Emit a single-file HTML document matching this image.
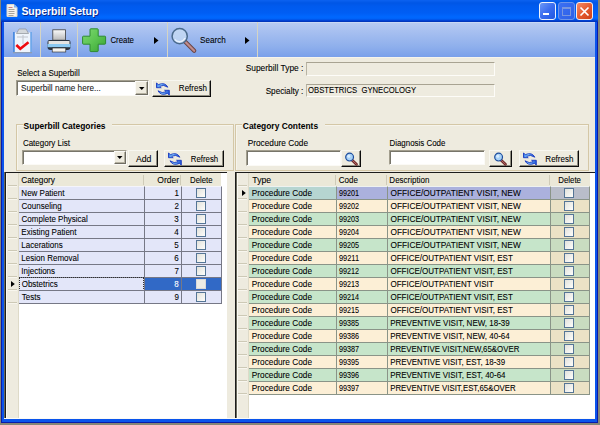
<!DOCTYPE html>
<html><head><meta charset="utf-8">
<style>
*{margin:0;padding:0;box-sizing:border-box}
html,body{width:600px;height:425px;overflow:hidden;background:#868678}
body{position:relative;font-family:"Liberation Sans",sans-serif}
.a{position:absolute}
text{font-family:"Liberation Sans",sans-serif}
</style></head><body>
<div class="a" style="left:1px;top:0;width:597px;height:423px;background:#0a1aa8"></div>
<div class="a" style="left:2px;top:0;width:595px;height:421.5px;background:#0a54ec"></div>
<div class="a" style="left:1px;top:0;width:597px;height:22px;background:linear-gradient(#0c62f0 0,#0056e6 3px,#005aee 6px,#005ef4 13px,#0068ff 17px,#0062f8 19px,#0042d4 20.5px,#0030b0 22px)"></div>
<svg class="a" style="left:6px;top:4px" width="12" height="13" viewBox="0 0 12 13">
<path d="M1 .5h7l3 3v9H1z" fill="#f4f2ec" stroke="#dcd8cc"/>
<path d="M8 .5v3h3z" fill="#7ab0f6"/>
<path d="M2.5 3.5h4" stroke="#d08080"/><path d="M2.5 5.5h6M2.5 7.5h6M2.5 9.5h6M2.5 11.5h5" stroke="#a8a49c"/>
</svg>
<div class="a" style="left:539px;top:2px;width:17px;height:18px;border:1px solid #eef2fc;border-radius:3px;background:linear-gradient(135deg,#6c98f6,#3a6cf0 50%,#2058e0)"></div>
<div class="a" style="left:543px;top:13px;width:6px;height:2px;background:#fff"></div>
<div class="a" style="left:558px;top:2px;width:17px;height:18px;border:1px solid #6c94ea;border-radius:3px;background:linear-gradient(135deg,#3c70f2,#2c60e8)"></div>
<div class="a" style="left:562px;top:7px;width:9px;height:9px;border:1px solid #7896e0;border-top-width:2px"></div>
<div class="a" style="left:576px;top:2px;width:17px;height:18px;border:1px solid #f4ecec;border-radius:3px;background:linear-gradient(135deg,#f48a66,#e4582c 55%,#cc4018)"></div>
<svg class="a" style="left:576px;top:2px" width="17" height="18"><path d="M4.5 5.5l8 8M12.5 5.5l-8 8" stroke="#fff" stroke-width="1.7"/></svg>
<div class="a" style="left:4px;top:22px;width:591px;height:35px;background:linear-gradient(#dae4f8 0,#b6caf2 1px,#a6bff0 10px,#8eafec 25px,#7aa0ea 35px)"></div>
<div class="a" style="left:40px;top:22px;width:1px;height:35px;background:#d4d4c4"></div>
<div class="a" style="left:77px;top:22px;width:1px;height:35px;background:#d4d4c4"></div>
<div class="a" style="left:167px;top:22px;width:1px;height:35px;background:#d4d4c4"></div>
<div class="a" style="left:257px;top:22px;width:1px;height:35px;background:#d4d4c4"></div>
<svg class="a" style="left:12px;top:28px" width="22" height="26" viewBox="0 0 22 26">
<rect x="1.5" y="4.5" width="18" height="20.5" fill="#eef4fc"/>
<rect x="1" y="4" width="1.8" height="21" fill="#4a8ae0"/>
<rect x="18.2" y="4" width="1.8" height="21" fill="#70a8ea"/>
<rect x="1" y="24" width="19" height="1.3" fill="#8c9cb4"/>
<path d="M7 1L14 1L16.5 5.5L4.5 5.5z" fill="#d4d8dc" stroke="#8c9098" stroke-width=".7"/>
<path d="M5 9h11M11 7v9" stroke="#c0c4cc" stroke-width="1"/>
<path d="M4.3 17L8.3 20.8L16.5 14.3" stroke="#ee0a10" stroke-width="2.6" fill="none"/>
</svg>
<svg class="a" style="left:45px;top:28px" width="26" height="26" viewBox="0 0 26 26">
<defs><linearGradient id="pp" x1="0" y1="0" x2="0" y2="1"><stop offset="0" stop-color="#fbfbfb"/><stop offset="1" stop-color="#b8b8b8"/></linearGradient></defs>
<rect x="7.8" y="1.8" width="12.6" height="10.4" fill="url(#pp)" stroke="#3c3c3c" stroke-width=".8"/>
<path d="M4.5 12h19a2 2 0 0 1 2 2v5a3 3 0 0 1-3 3h-17a3 3 0 0 1-3-3v-5a2 2 0 0 1 2-2z" fill="#2a3440"/>
<rect x="3.5" y="13" width="21" height="3" fill="#e4e4e2"/>
<rect x="2.5" y="16" width="23" height="3.2" fill="#8ccaf2"/>
<rect x="7.2" y="20" width="13.6" height="4" fill="#f4f2ee" stroke="#222" stroke-width=".6"/>
</svg>
<svg class="a" style="left:81px;top:28px" width="26" height="26" viewBox="0 0 26 26">
<defs><linearGradient id="gp" x1="0" y1="0" x2="1" y2="1"><stop offset="0" stop-color="#80d872"/><stop offset=".5" stop-color="#5cc452"/><stop offset="1" stop-color="#38a234"/></linearGradient></defs>
<path d="M9.8 0.8h6.6a.8.8 0 0 1 .8.8v6.6h6.6a.8.8 0 0 1 .8.8v6.4a.8.8 0 0 1-.8.8h-6.6v6.6a.8.8 0 0 1-.8.8h-6.6a.8.8 0 0 1-.8-.8v-6.6h-6.6a.8.8 0 0 1-.8-.8v-6.4a.8.8 0 0 1 .8-.8h6.6v-6.6a.8.8 0 0 1 .8-.8z" fill="url(#gp)" stroke="#2e8a30" stroke-width="1"/>
</svg>
<svg class="a" style="left:154px;top:37px" width="5" height="7"><path d="M0 0l4.5 3.5L0 7z" fill="#000"/></svg>
<svg class="a" style="left:170px;top:27px" width="28" height="28" viewBox="0 0 28 28">
<path d="M15 14.5l9.2 9.3" stroke="#6a4444" stroke-width="4.2" stroke-linecap="round"/>
<path d="M15 14.5l9.2 9.3" stroke="#c08c8c" stroke-width="2.2" stroke-linecap="round"/>
<circle cx="9.7" cy="9.2" r="7.6" fill="#c8dcf4" fill-opacity=".75" stroke="#4a6a8c" stroke-width="1.5"/>
<path d="M4.8 12.5A6 6 0 0 0 15 11" fill="none" stroke="#f4faff" stroke-width="1.3" opacity=".8"/>
</svg>
<svg class="a" style="left:245px;top:37px" width="5" height="7"><path d="M0 0l4.5 3.5L0 7z" fill="#000"/></svg>
<div class="a" style="left:4px;top:57px;width:591px;height:362px;background:#eeebdf"></div>
<div class="a" style="left:4px;top:57px;width:591px;height:1px;background:#f6f4ec"></div>
<div class="a" style="left:16px;top:80px;width:133px;height:16px;background:#fff;border-top:1px solid #a29e8e;border-left:1px solid #a29e8e;border-bottom:1px solid #fbfaf6;border-right:1px solid #fbfaf6"></div>
<div class="a" style="left:17px;top:81px;width:131px;height:1px;background:#77756a"></div>
<div class="a" style="left:17px;top:81px;width:1px;height:14px;background:#77756a"></div>
<div class="a" style="left:135px;top:81px;width:13px;height:14px;background:#eeebdf;border-top:1px solid #fbfaf6;border-left:1px solid #fbfaf6;border-right:1px solid #6e6c62;border-bottom:1px solid #6e6c62"></div>
<div class="a" style="left:136px;top:93px;width:11px;height:1px;background:#b4b0a0"></div>
<div class="a" style="left:146px;top:82px;width:1px;height:12px;background:#b4b0a0"></div>
<svg class="a" style="left:138.5px;top:86.5px" width="6" height="4"><path d="M0 0h5.5L2.75 3z" fill="#000"/></svg>
<div class="a" style="left:152px;top:80px;width:59px;height:17px;background:#eeebdf;border-top:1px solid #f8f7f0;border-left:1px solid #f8f7f0;border-right:1px solid #0c0c0c;border-bottom:1px solid #0c0c0c"></div>
<div class="a" style="left:153px;top:95px;width:57px;height:1px;background:#8e8c80"></div>
<div class="a" style="left:209px;top:81px;width:1px;height:15px;background:#8e8c80"></div>
<svg class="a" style="left:155px;top:81px" width="16" height="16" viewBox="0 0 16 16">
<defs><linearGradient id="rg155" x1="0" y1="0" x2="1" y2="0"><stop offset="0" stop-color="#3a78e8"/><stop offset=".35" stop-color="#8cd8ff"/><stop offset=".7" stop-color="#4a8cf0"/><stop offset="1" stop-color="#2050d0"/></linearGradient></defs>
<path d="M1.5 2.0L1.5 6.7L6.2 6.7L4.6 5.2Q8.5 3.2 12.8 6.2Q10 0.8 3.4 3.6Z" fill="url(#rg155)" stroke="#1838c0" stroke-width=".9" stroke-linejoin="round"/>
<path d="M13.5 13L13.5 8.3L8.8 8.3L10.4 9.8Q6.5 11.8 2.2 8.8Q5 14.2 11.6 11.4Z" transform="translate(0.8 1)" fill="url(#rg155)" stroke="#1838c0" stroke-width=".9" stroke-linejoin="round"/>
</svg>
<div class="a" style="left:306px;top:62px;width:189px;height:14px;background:#eeebdf;border-top:1px solid #a8a392;border-left:1px solid #b8b4a4;border-right:1px solid #fdfcf8;border-bottom:1px solid #fdfcf8"></div>
<div class="a" style="left:306px;top:84px;width:189px;height:13px;background:#eeebdf;border-top:1px solid #a8a392;border-left:1px solid #b8b4a4;border-right:1px solid #fdfcf8;border-bottom:1px solid #fdfcf8"></div>
<div class="a" style="left:16px;top:124px;width:218px;height:47px;border:1px solid #d4c7a6"></div>
<div class="a" style="left:17px;top:125px;width:216px;height:45px;border-left:1px solid #f6f4ec;border-top:1px solid #f6f4ec"></div>
<div class="a" style="left:23px;top:124px;width:89px;height:2px;background:#eeebdf"></div>
<div class="a" style="left:22px;top:150px;width:105px;height:15px;background:#fff;border-top:1px solid #a29e8e;border-left:1px solid #a29e8e;border-bottom:1px solid #fbfaf6;border-right:1px solid #fbfaf6"></div>
<div class="a" style="left:23px;top:151px;width:103px;height:1px;background:#77756a"></div>
<div class="a" style="left:23px;top:151px;width:1px;height:13px;background:#77756a"></div>
<div class="a" style="left:114px;top:151px;width:12px;height:13px;background:#eeebdf;border-top:1px solid #fbfaf6;border-left:1px solid #fbfaf6;border-right:1px solid #6e6c62;border-bottom:1px solid #6e6c62"></div>
<div class="a" style="left:115px;top:162px;width:10px;height:1px;background:#b4b0a0"></div>
<div class="a" style="left:124px;top:152px;width:1px;height:11px;background:#b4b0a0"></div>
<svg class="a" style="left:117.0px;top:156.0px" width="6" height="4"><path d="M0 0h5.5L2.75 3z" fill="#000"/></svg>
<div class="a" style="left:128px;top:150px;width:30px;height:17px;background:#eeebdf;border-top:1px solid #f8f7f0;border-left:1px solid #f8f7f0;border-right:1px solid #0c0c0c;border-bottom:1px solid #0c0c0c"></div>
<div class="a" style="left:129px;top:165px;width:28px;height:1px;background:#8e8c80"></div>
<div class="a" style="left:156px;top:151px;width:1px;height:15px;background:#8e8c80"></div>
<div class="a" style="left:164px;top:150px;width:60px;height:17px;background:#eeebdf;border-top:1px solid #f8f7f0;border-left:1px solid #f8f7f0;border-right:1px solid #0c0c0c;border-bottom:1px solid #0c0c0c"></div>
<div class="a" style="left:165px;top:165px;width:58px;height:1px;background:#8e8c80"></div>
<div class="a" style="left:222px;top:151px;width:1px;height:15px;background:#8e8c80"></div>
<svg class="a" style="left:167px;top:151px" width="16" height="16" viewBox="0 0 16 16">
<defs><linearGradient id="rg167" x1="0" y1="0" x2="1" y2="0"><stop offset="0" stop-color="#3a78e8"/><stop offset=".35" stop-color="#8cd8ff"/><stop offset=".7" stop-color="#4a8cf0"/><stop offset="1" stop-color="#2050d0"/></linearGradient></defs>
<path d="M1.5 2.0L1.5 6.7L6.2 6.7L4.6 5.2Q8.5 3.2 12.8 6.2Q10 0.8 3.4 3.6Z" fill="url(#rg167)" stroke="#1838c0" stroke-width=".9" stroke-linejoin="round"/>
<path d="M13.5 13L13.5 8.3L8.8 8.3L10.4 9.8Q6.5 11.8 2.2 8.8Q5 14.2 11.6 11.4Z" transform="translate(0.8 1)" fill="url(#rg167)" stroke="#1838c0" stroke-width=".9" stroke-linejoin="round"/>
</svg>
<div class="a" style="left:235px;top:124px;width:354px;height:47px;border:1px solid #d4c7a6"></div>
<div class="a" style="left:236px;top:125px;width:352px;height:45px;border-left:1px solid #f6f4ec;border-top:1px solid #f6f4ec"></div>
<div class="a" style="left:242px;top:124px;width:83px;height:2px;background:#eeebdf"></div>
<div class="a" style="left:246px;top:150px;width:95px;height:16px;background:#fff;border-top:1px solid #a29e8e;border-left:1px solid #a29e8e;border-bottom:1px solid #fbfaf6;border-right:1px solid #fbfaf6"></div>
<div class="a" style="left:247px;top:151px;width:93px;height:1px;background:#77756a"></div>
<div class="a" style="left:247px;top:151px;width:1px;height:14px;background:#77756a"></div>
<div class="a" style="left:341px;top:150px;width:20px;height:17px;background:#eeebdf;border-top:1px solid #f8f7f0;border-left:1px solid #f8f7f0;border-right:1px solid #0c0c0c;border-bottom:1px solid #0c0c0c"></div>
<div class="a" style="left:342px;top:165px;width:18px;height:1px;background:#8e8c80"></div>
<div class="a" style="left:359px;top:151px;width:1px;height:15px;background:#8e8c80"></div>
<svg class="a" style="left:344px;top:152px" width="14" height="14" viewBox="0 0 14 14">
<path d="M8.2 8.2l4.2 4.0" stroke="#6e2a2a" stroke-width="2.8" stroke-linecap="round"/>
<path d="M8.2 8.2l4.2 4.0" stroke="#b86a68" stroke-width="1" stroke-linecap="round"/>
<circle cx="5.6" cy="5.1" r="3.9" fill="#a8d2f8" stroke="#1c4c9c" stroke-width="1.2"/>
<circle cx="4.8" cy="4.3" r="1.5" fill="#e6f4ff" opacity=".8"/>
</svg>
<div class="a" style="left:389px;top:150px;width:96px;height:15px;background:#fff;border-top:1px solid #a29e8e;border-left:1px solid #a29e8e;border-bottom:1px solid #fbfaf6;border-right:1px solid #fbfaf6"></div>
<div class="a" style="left:390px;top:151px;width:94px;height:1px;background:#77756a"></div>
<div class="a" style="left:390px;top:151px;width:1px;height:13px;background:#77756a"></div>
<div class="a" style="left:489px;top:150px;width:23px;height:17px;background:#eeebdf;border-top:1px solid #f8f7f0;border-left:1px solid #f8f7f0;border-right:1px solid #0c0c0c;border-bottom:1px solid #0c0c0c"></div>
<div class="a" style="left:490px;top:165px;width:21px;height:1px;background:#8e8c80"></div>
<div class="a" style="left:510px;top:151px;width:1px;height:15px;background:#8e8c80"></div>
<svg class="a" style="left:493px;top:152px" width="14" height="14" viewBox="0 0 14 14">
<path d="M8.2 8.2l4.2 4.0" stroke="#6e2a2a" stroke-width="2.8" stroke-linecap="round"/>
<path d="M8.2 8.2l4.2 4.0" stroke="#b86a68" stroke-width="1" stroke-linecap="round"/>
<circle cx="5.6" cy="5.1" r="3.9" fill="#a8d2f8" stroke="#1c4c9c" stroke-width="1.2"/>
<circle cx="4.8" cy="4.3" r="1.5" fill="#e6f4ff" opacity=".8"/>
</svg>
<div class="a" style="left:519px;top:150px;width:60px;height:17px;background:#eeebdf;border-top:1px solid #f8f7f0;border-left:1px solid #f8f7f0;border-right:1px solid #0c0c0c;border-bottom:1px solid #0c0c0c"></div>
<div class="a" style="left:520px;top:165px;width:58px;height:1px;background:#8e8c80"></div>
<div class="a" style="left:577px;top:151px;width:1px;height:15px;background:#8e8c80"></div>
<svg class="a" style="left:522px;top:151px" width="16" height="16" viewBox="0 0 16 16">
<defs><linearGradient id="rg522" x1="0" y1="0" x2="1" y2="0"><stop offset="0" stop-color="#3a78e8"/><stop offset=".35" stop-color="#8cd8ff"/><stop offset=".7" stop-color="#4a8cf0"/><stop offset="1" stop-color="#2050d0"/></linearGradient></defs>
<path d="M1.5 2.0L1.5 6.7L6.2 6.7L4.6 5.2Q8.5 3.2 12.8 6.2Q10 0.8 3.4 3.6Z" fill="url(#rg522)" stroke="#1838c0" stroke-width=".9" stroke-linejoin="round"/>
<path d="M13.5 13L13.5 8.3L8.8 8.3L10.4 9.8Q6.5 11.8 2.2 8.8Q5 14.2 11.6 11.4Z" transform="translate(0.8 1)" fill="url(#rg522)" stroke="#1838c0" stroke-width=".9" stroke-linejoin="round"/>
</svg>
<div class="a" style="left:5px;top:172px;width:222px;height:247px;background:#fff;border-top:1px solid #1c1c1c;border-left:1px solid #1c1c1c"></div>
<div class="a" style="left:227px;top:172px;width:8px;height:247px;background:#eeebdf"></div>
<div class="a" style="left:4px;top:172px;width:1px;height:247px;background:#6a6a5c"></div>
<div class="a" style="left:6px;top:173px;width:13px;height:246px;background:#eeebdf;border-left:1px solid #fbfaf4;border-right:1px solid #dedac8"></div>
<div class="a" style="left:19px;top:173px;width:202px;height:13px;background:#ebe8d8"></div>
<div class="a" style="left:143px;top:175px;width:1px;height:10px;background:#cfcbb8"></div>
<div class="a" style="left:180px;top:175px;width:1px;height:10px;background:#cfcbb8"></div>
<div class="a" style="left:8px;top:185px;width:9px;height:1px;background:#cdc9b6"></div>
<div class="a" style="left:8px;top:186px;width:9px;height:1px;background:#f8f6ee"></div>
<div class="a" style="left:19px;top:186px;width:125px;height:13px;background:#e3e6f9;border-top:1px solid #f4f4fb"></div>
<div class="a" style="left:144px;top:186px;width:37px;height:13px;background:#e3e6f9;border-top:1px solid #f4f4fb;border-left:1px solid #767886"></div>
<div class="a" style="left:181px;top:186px;width:41px;height:13px;background:#e3e6f9;border-top:1px solid #f4f4fb;border-left:1px solid #767886;border-right:1px solid #767886"></div>
<div class="a" style="left:196px;top:188px;width:10px;height:10px;background:linear-gradient(135deg,#e2e2dc,#fdfdfb);border:1px solid #557596"></div>
<div class="a" style="left:8px;top:198px;width:9px;height:1px;background:#cdc9b6"></div>
<div class="a" style="left:8px;top:199px;width:9px;height:1px;background:#f8f6ee"></div>
<div class="a" style="left:19px;top:199px;width:125px;height:13px;background:#e3e6f9;border-top:1px solid #767886"></div>
<div class="a" style="left:144px;top:199px;width:37px;height:13px;background:#e3e6f9;border-top:1px solid #767886;border-left:1px solid #767886"></div>
<div class="a" style="left:181px;top:199px;width:41px;height:13px;background:#e3e6f9;border-top:1px solid #767886;border-left:1px solid #767886;border-right:1px solid #767886"></div>
<div class="a" style="left:196px;top:201px;width:10px;height:10px;background:linear-gradient(135deg,#e2e2dc,#fdfdfb);border:1px solid #557596"></div>
<div class="a" style="left:8px;top:211px;width:9px;height:1px;background:#cdc9b6"></div>
<div class="a" style="left:8px;top:212px;width:9px;height:1px;background:#f8f6ee"></div>
<div class="a" style="left:19px;top:212px;width:125px;height:13px;background:#e3e6f9;border-top:1px solid #767886"></div>
<div class="a" style="left:144px;top:212px;width:37px;height:13px;background:#e3e6f9;border-top:1px solid #767886;border-left:1px solid #767886"></div>
<div class="a" style="left:181px;top:212px;width:41px;height:13px;background:#e3e6f9;border-top:1px solid #767886;border-left:1px solid #767886;border-right:1px solid #767886"></div>
<div class="a" style="left:196px;top:214px;width:10px;height:10px;background:linear-gradient(135deg,#e2e2dc,#fdfdfb);border:1px solid #557596"></div>
<div class="a" style="left:8px;top:224px;width:9px;height:1px;background:#cdc9b6"></div>
<div class="a" style="left:8px;top:225px;width:9px;height:1px;background:#f8f6ee"></div>
<div class="a" style="left:19px;top:225px;width:125px;height:13px;background:#e3e6f9;border-top:1px solid #767886"></div>
<div class="a" style="left:144px;top:225px;width:37px;height:13px;background:#e3e6f9;border-top:1px solid #767886;border-left:1px solid #767886"></div>
<div class="a" style="left:181px;top:225px;width:41px;height:13px;background:#e3e6f9;border-top:1px solid #767886;border-left:1px solid #767886;border-right:1px solid #767886"></div>
<div class="a" style="left:196px;top:227px;width:10px;height:10px;background:linear-gradient(135deg,#e2e2dc,#fdfdfb);border:1px solid #557596"></div>
<div class="a" style="left:8px;top:237px;width:9px;height:1px;background:#cdc9b6"></div>
<div class="a" style="left:8px;top:238px;width:9px;height:1px;background:#f8f6ee"></div>
<div class="a" style="left:19px;top:238px;width:125px;height:13px;background:#e3e6f9;border-top:1px solid #767886"></div>
<div class="a" style="left:144px;top:238px;width:37px;height:13px;background:#e3e6f9;border-top:1px solid #767886;border-left:1px solid #767886"></div>
<div class="a" style="left:181px;top:238px;width:41px;height:13px;background:#e3e6f9;border-top:1px solid #767886;border-left:1px solid #767886;border-right:1px solid #767886"></div>
<div class="a" style="left:196px;top:240px;width:10px;height:10px;background:linear-gradient(135deg,#e2e2dc,#fdfdfb);border:1px solid #557596"></div>
<div class="a" style="left:8px;top:250px;width:9px;height:1px;background:#cdc9b6"></div>
<div class="a" style="left:8px;top:251px;width:9px;height:1px;background:#f8f6ee"></div>
<div class="a" style="left:19px;top:251px;width:125px;height:13px;background:#e3e6f9;border-top:1px solid #767886"></div>
<div class="a" style="left:144px;top:251px;width:37px;height:13px;background:#e3e6f9;border-top:1px solid #767886;border-left:1px solid #767886"></div>
<div class="a" style="left:181px;top:251px;width:41px;height:13px;background:#e3e6f9;border-top:1px solid #767886;border-left:1px solid #767886;border-right:1px solid #767886"></div>
<div class="a" style="left:196px;top:253px;width:10px;height:10px;background:linear-gradient(135deg,#e2e2dc,#fdfdfb);border:1px solid #557596"></div>
<div class="a" style="left:8px;top:263px;width:9px;height:1px;background:#cdc9b6"></div>
<div class="a" style="left:8px;top:264px;width:9px;height:1px;background:#f8f6ee"></div>
<div class="a" style="left:19px;top:264px;width:125px;height:13px;background:#e3e6f9;border-top:1px solid #767886"></div>
<div class="a" style="left:144px;top:264px;width:37px;height:13px;background:#e3e6f9;border-top:1px solid #767886;border-left:1px solid #767886"></div>
<div class="a" style="left:181px;top:264px;width:41px;height:13px;background:#e3e6f9;border-top:1px solid #767886;border-left:1px solid #767886;border-right:1px solid #767886"></div>
<div class="a" style="left:196px;top:266px;width:10px;height:10px;background:linear-gradient(135deg,#e2e2dc,#fdfdfb);border:1px solid #557596"></div>
<div class="a" style="left:8px;top:276px;width:9px;height:1px;background:#cdc9b6"></div>
<div class="a" style="left:8px;top:277px;width:9px;height:1px;background:#f8f6ee"></div>
<div class="a" style="left:19px;top:277px;width:125px;height:13px;background:#e3e6f9;border-top:1px solid #767886"></div>
<div class="a" style="left:144px;top:277px;width:37px;height:13px;background:#3169c6;border-top:1px solid #767886;border-left:1px solid #767886"></div>
<div class="a" style="left:181px;top:277px;width:41px;height:13px;background:#3169c6;border-top:1px solid #767886;border-left:1px solid #767886;border-right:1px solid #767886"></div>
<div class="a" style="left:196px;top:279px;width:10px;height:10px;background:#ecebe6;border:1px solid #d8d8d8"></div>
<div class="a" style="left:19px;top:277px;width:125px;height:14px;border:1px dotted #303030"></div>
<svg class="a" style="left:11px;top:281px" width="5" height="7"><path d="M0 0L3.8 3L0 6z" fill="#000"/></svg>
<div class="a" style="left:8px;top:289px;width:9px;height:1px;background:#cdc9b6"></div>
<div class="a" style="left:8px;top:290px;width:9px;height:1px;background:#f8f6ee"></div>
<div class="a" style="left:19px;top:290px;width:125px;height:13px;background:#e3e6f9;border-top:1px solid #767886"></div>
<div class="a" style="left:144px;top:290px;width:37px;height:13px;background:#e3e6f9;border-top:1px solid #767886;border-left:1px solid #767886"></div>
<div class="a" style="left:181px;top:290px;width:41px;height:13px;background:#e3e6f9;border-top:1px solid #767886;border-left:1px solid #767886;border-right:1px solid #767886"></div>
<div class="a" style="left:196px;top:292px;width:10px;height:10px;background:linear-gradient(135deg,#e2e2dc,#fdfdfb);border:1px solid #557596"></div>
<div class="a" style="left:19px;top:303px;width:203px;height:1px;background:#767886"></div>
<div class="a" style="left:8px;top:302px;width:9px;height:1px;background:#cdc9b6"></div>
<div class="a" style="left:8px;top:303px;width:9px;height:1px;background:#f8f6ee"></div>
<div class="a" style="left:235px;top:172px;width:360px;height:247px;background:#fff;border-top:1px solid #1c1c1c;border-left:1px solid #1c1c1c"></div>
<div class="a" style="left:236px;top:173px;width:13px;height:246px;background:#eeebdf;border-left:1px solid #6a6a5c;border-right:1px solid #dedac8"></div>
<div class="a" style="left:237px;top:173px;width:1px;height:246px;background:#fbfaf4"></div>
<div class="a" style="left:249px;top:173px;width:341px;height:13px;background:#ebe8d8"></div>
<div class="a" style="left:335px;top:175px;width:1px;height:10px;background:#cfcbb8"></div>
<div class="a" style="left:386px;top:175px;width:1px;height:10px;background:#cfcbb8"></div>
<div class="a" style="left:549px;top:175px;width:1px;height:10px;background:#cfcbb8"></div>
<div class="a" style="left:238px;top:185px;width:9px;height:1px;background:#cdc9b6"></div>
<div class="a" style="left:238px;top:186px;width:9px;height:1px;background:#f8f6ee"></div>
<div class="a" style="left:249px;top:186px;width:87px;height:13px;background:#b6d5d1;border-top:1px solid #eef2f0"></div>
<div class="a" style="left:336px;top:186px;width:51px;height:13px;background:#abb1dd;border-top:1px solid #eef2f0;border-left:1px solid #8a9488"></div>
<div class="a" style="left:387px;top:186px;width:163px;height:13px;background:#abb1dd;border-top:1px solid #eef2f0;border-left:1px solid #8a9488"></div>
<div class="a" style="left:550px;top:186px;width:40px;height:13px;background:#b9bdca;border-top:1px solid #eef2f0;border-left:1px solid #8a9488;border-right:1px solid #8a9488"></div>
<div class="a" style="left:564px;top:188px;width:10px;height:10px;background:linear-gradient(135deg,#e2e2dc,#fdfdfb);border:1px solid #557596"></div>
<svg class="a" style="left:241.5px;top:190px" width="5" height="7"><path d="M0 0L3.8 3L0 6z" fill="#000"/></svg>
<div class="a" style="left:238px;top:198px;width:9px;height:1px;background:#cdc9b6"></div>
<div class="a" style="left:238px;top:199px;width:9px;height:1px;background:#f8f6ee"></div>
<div class="a" style="left:249px;top:199px;width:87px;height:13px;background:#fcefd6;border-top:1px solid #8a9488"></div>
<div class="a" style="left:336px;top:199px;width:51px;height:13px;background:#fcefd6;border-top:1px solid #8a9488;border-left:1px solid #8a9488"></div>
<div class="a" style="left:387px;top:199px;width:163px;height:13px;background:#fcefd6;border-top:1px solid #8a9488;border-left:1px solid #8a9488"></div>
<div class="a" style="left:550px;top:199px;width:40px;height:13px;background:#ebe2c6;border-top:1px solid #8a9488;border-left:1px solid #8a9488;border-right:1px solid #8a9488"></div>
<div class="a" style="left:564px;top:201px;width:10px;height:10px;background:linear-gradient(135deg,#e2e2dc,#fdfdfb);border:1px solid #557596"></div>
<div class="a" style="left:238px;top:211px;width:9px;height:1px;background:#cdc9b6"></div>
<div class="a" style="left:238px;top:212px;width:9px;height:1px;background:#f8f6ee"></div>
<div class="a" style="left:249px;top:212px;width:87px;height:13px;background:#c6e5ca;border-top:1px solid #8a9488"></div>
<div class="a" style="left:336px;top:212px;width:51px;height:13px;background:#c6e5ca;border-top:1px solid #8a9488;border-left:1px solid #8a9488"></div>
<div class="a" style="left:387px;top:212px;width:163px;height:13px;background:#c6e5ca;border-top:1px solid #8a9488;border-left:1px solid #8a9488"></div>
<div class="a" style="left:550px;top:212px;width:40px;height:13px;background:#c9dcc0;border-top:1px solid #8a9488;border-left:1px solid #8a9488;border-right:1px solid #8a9488"></div>
<div class="a" style="left:564px;top:214px;width:10px;height:10px;background:linear-gradient(135deg,#e2e2dc,#fdfdfb);border:1px solid #557596"></div>
<div class="a" style="left:238px;top:224px;width:9px;height:1px;background:#cdc9b6"></div>
<div class="a" style="left:238px;top:225px;width:9px;height:1px;background:#f8f6ee"></div>
<div class="a" style="left:249px;top:225px;width:87px;height:13px;background:#fcefd6;border-top:1px solid #8a9488"></div>
<div class="a" style="left:336px;top:225px;width:51px;height:13px;background:#fcefd6;border-top:1px solid #8a9488;border-left:1px solid #8a9488"></div>
<div class="a" style="left:387px;top:225px;width:163px;height:13px;background:#fcefd6;border-top:1px solid #8a9488;border-left:1px solid #8a9488"></div>
<div class="a" style="left:550px;top:225px;width:40px;height:13px;background:#ebe2c6;border-top:1px solid #8a9488;border-left:1px solid #8a9488;border-right:1px solid #8a9488"></div>
<div class="a" style="left:564px;top:227px;width:10px;height:10px;background:linear-gradient(135deg,#e2e2dc,#fdfdfb);border:1px solid #557596"></div>
<div class="a" style="left:238px;top:237px;width:9px;height:1px;background:#cdc9b6"></div>
<div class="a" style="left:238px;top:238px;width:9px;height:1px;background:#f8f6ee"></div>
<div class="a" style="left:249px;top:238px;width:87px;height:13px;background:#c6e5ca;border-top:1px solid #8a9488"></div>
<div class="a" style="left:336px;top:238px;width:51px;height:13px;background:#c6e5ca;border-top:1px solid #8a9488;border-left:1px solid #8a9488"></div>
<div class="a" style="left:387px;top:238px;width:163px;height:13px;background:#c6e5ca;border-top:1px solid #8a9488;border-left:1px solid #8a9488"></div>
<div class="a" style="left:550px;top:238px;width:40px;height:13px;background:#c9dcc0;border-top:1px solid #8a9488;border-left:1px solid #8a9488;border-right:1px solid #8a9488"></div>
<div class="a" style="left:564px;top:240px;width:10px;height:10px;background:linear-gradient(135deg,#e2e2dc,#fdfdfb);border:1px solid #557596"></div>
<div class="a" style="left:238px;top:250px;width:9px;height:1px;background:#cdc9b6"></div>
<div class="a" style="left:238px;top:251px;width:9px;height:1px;background:#f8f6ee"></div>
<div class="a" style="left:249px;top:251px;width:87px;height:13px;background:#fcefd6;border-top:1px solid #8a9488"></div>
<div class="a" style="left:336px;top:251px;width:51px;height:13px;background:#fcefd6;border-top:1px solid #8a9488;border-left:1px solid #8a9488"></div>
<div class="a" style="left:387px;top:251px;width:163px;height:13px;background:#fcefd6;border-top:1px solid #8a9488;border-left:1px solid #8a9488"></div>
<div class="a" style="left:550px;top:251px;width:40px;height:13px;background:#ebe2c6;border-top:1px solid #8a9488;border-left:1px solid #8a9488;border-right:1px solid #8a9488"></div>
<div class="a" style="left:564px;top:253px;width:10px;height:10px;background:linear-gradient(135deg,#e2e2dc,#fdfdfb);border:1px solid #557596"></div>
<div class="a" style="left:238px;top:263px;width:9px;height:1px;background:#cdc9b6"></div>
<div class="a" style="left:238px;top:264px;width:9px;height:1px;background:#f8f6ee"></div>
<div class="a" style="left:249px;top:264px;width:87px;height:13px;background:#c6e5ca;border-top:1px solid #8a9488"></div>
<div class="a" style="left:336px;top:264px;width:51px;height:13px;background:#c6e5ca;border-top:1px solid #8a9488;border-left:1px solid #8a9488"></div>
<div class="a" style="left:387px;top:264px;width:163px;height:13px;background:#c6e5ca;border-top:1px solid #8a9488;border-left:1px solid #8a9488"></div>
<div class="a" style="left:550px;top:264px;width:40px;height:13px;background:#c9dcc0;border-top:1px solid #8a9488;border-left:1px solid #8a9488;border-right:1px solid #8a9488"></div>
<div class="a" style="left:564px;top:266px;width:10px;height:10px;background:linear-gradient(135deg,#e2e2dc,#fdfdfb);border:1px solid #557596"></div>
<div class="a" style="left:238px;top:276px;width:9px;height:1px;background:#cdc9b6"></div>
<div class="a" style="left:238px;top:277px;width:9px;height:1px;background:#f8f6ee"></div>
<div class="a" style="left:249px;top:277px;width:87px;height:13px;background:#fcefd6;border-top:1px solid #8a9488"></div>
<div class="a" style="left:336px;top:277px;width:51px;height:13px;background:#fcefd6;border-top:1px solid #8a9488;border-left:1px solid #8a9488"></div>
<div class="a" style="left:387px;top:277px;width:163px;height:13px;background:#fcefd6;border-top:1px solid #8a9488;border-left:1px solid #8a9488"></div>
<div class="a" style="left:550px;top:277px;width:40px;height:13px;background:#ebe2c6;border-top:1px solid #8a9488;border-left:1px solid #8a9488;border-right:1px solid #8a9488"></div>
<div class="a" style="left:564px;top:279px;width:10px;height:10px;background:linear-gradient(135deg,#e2e2dc,#fdfdfb);border:1px solid #557596"></div>
<div class="a" style="left:238px;top:289px;width:9px;height:1px;background:#cdc9b6"></div>
<div class="a" style="left:238px;top:290px;width:9px;height:1px;background:#f8f6ee"></div>
<div class="a" style="left:249px;top:290px;width:87px;height:13px;background:#c6e5ca;border-top:1px solid #8a9488"></div>
<div class="a" style="left:336px;top:290px;width:51px;height:13px;background:#c6e5ca;border-top:1px solid #8a9488;border-left:1px solid #8a9488"></div>
<div class="a" style="left:387px;top:290px;width:163px;height:13px;background:#c6e5ca;border-top:1px solid #8a9488;border-left:1px solid #8a9488"></div>
<div class="a" style="left:550px;top:290px;width:40px;height:13px;background:#c9dcc0;border-top:1px solid #8a9488;border-left:1px solid #8a9488;border-right:1px solid #8a9488"></div>
<div class="a" style="left:564px;top:292px;width:10px;height:10px;background:linear-gradient(135deg,#e2e2dc,#fdfdfb);border:1px solid #557596"></div>
<div class="a" style="left:238px;top:302px;width:9px;height:1px;background:#cdc9b6"></div>
<div class="a" style="left:238px;top:303px;width:9px;height:1px;background:#f8f6ee"></div>
<div class="a" style="left:249px;top:303px;width:87px;height:13px;background:#fcefd6;border-top:1px solid #8a9488"></div>
<div class="a" style="left:336px;top:303px;width:51px;height:13px;background:#fcefd6;border-top:1px solid #8a9488;border-left:1px solid #8a9488"></div>
<div class="a" style="left:387px;top:303px;width:163px;height:13px;background:#fcefd6;border-top:1px solid #8a9488;border-left:1px solid #8a9488"></div>
<div class="a" style="left:550px;top:303px;width:40px;height:13px;background:#ebe2c6;border-top:1px solid #8a9488;border-left:1px solid #8a9488;border-right:1px solid #8a9488"></div>
<div class="a" style="left:564px;top:305px;width:10px;height:10px;background:linear-gradient(135deg,#e2e2dc,#fdfdfb);border:1px solid #557596"></div>
<div class="a" style="left:238px;top:315px;width:9px;height:1px;background:#cdc9b6"></div>
<div class="a" style="left:238px;top:316px;width:9px;height:1px;background:#f8f6ee"></div>
<div class="a" style="left:249px;top:316px;width:87px;height:13px;background:#c6e5ca;border-top:1px solid #8a9488"></div>
<div class="a" style="left:336px;top:316px;width:51px;height:13px;background:#c6e5ca;border-top:1px solid #8a9488;border-left:1px solid #8a9488"></div>
<div class="a" style="left:387px;top:316px;width:163px;height:13px;background:#c6e5ca;border-top:1px solid #8a9488;border-left:1px solid #8a9488"></div>
<div class="a" style="left:550px;top:316px;width:40px;height:13px;background:#c9dcc0;border-top:1px solid #8a9488;border-left:1px solid #8a9488;border-right:1px solid #8a9488"></div>
<div class="a" style="left:564px;top:318px;width:10px;height:10px;background:linear-gradient(135deg,#e2e2dc,#fdfdfb);border:1px solid #557596"></div>
<div class="a" style="left:238px;top:328px;width:9px;height:1px;background:#cdc9b6"></div>
<div class="a" style="left:238px;top:329px;width:9px;height:1px;background:#f8f6ee"></div>
<div class="a" style="left:249px;top:329px;width:87px;height:13px;background:#fcefd6;border-top:1px solid #8a9488"></div>
<div class="a" style="left:336px;top:329px;width:51px;height:13px;background:#fcefd6;border-top:1px solid #8a9488;border-left:1px solid #8a9488"></div>
<div class="a" style="left:387px;top:329px;width:163px;height:13px;background:#fcefd6;border-top:1px solid #8a9488;border-left:1px solid #8a9488"></div>
<div class="a" style="left:550px;top:329px;width:40px;height:13px;background:#ebe2c6;border-top:1px solid #8a9488;border-left:1px solid #8a9488;border-right:1px solid #8a9488"></div>
<div class="a" style="left:564px;top:331px;width:10px;height:10px;background:linear-gradient(135deg,#e2e2dc,#fdfdfb);border:1px solid #557596"></div>
<div class="a" style="left:238px;top:341px;width:9px;height:1px;background:#cdc9b6"></div>
<div class="a" style="left:238px;top:342px;width:9px;height:1px;background:#f8f6ee"></div>
<div class="a" style="left:249px;top:342px;width:87px;height:13px;background:#c6e5ca;border-top:1px solid #8a9488"></div>
<div class="a" style="left:336px;top:342px;width:51px;height:13px;background:#c6e5ca;border-top:1px solid #8a9488;border-left:1px solid #8a9488"></div>
<div class="a" style="left:387px;top:342px;width:163px;height:13px;background:#c6e5ca;border-top:1px solid #8a9488;border-left:1px solid #8a9488"></div>
<div class="a" style="left:550px;top:342px;width:40px;height:13px;background:#c9dcc0;border-top:1px solid #8a9488;border-left:1px solid #8a9488;border-right:1px solid #8a9488"></div>
<div class="a" style="left:564px;top:344px;width:10px;height:10px;background:linear-gradient(135deg,#e2e2dc,#fdfdfb);border:1px solid #557596"></div>
<div class="a" style="left:238px;top:354px;width:9px;height:1px;background:#cdc9b6"></div>
<div class="a" style="left:238px;top:355px;width:9px;height:1px;background:#f8f6ee"></div>
<div class="a" style="left:249px;top:355px;width:87px;height:13px;background:#fcefd6;border-top:1px solid #8a9488"></div>
<div class="a" style="left:336px;top:355px;width:51px;height:13px;background:#fcefd6;border-top:1px solid #8a9488;border-left:1px solid #8a9488"></div>
<div class="a" style="left:387px;top:355px;width:163px;height:13px;background:#fcefd6;border-top:1px solid #8a9488;border-left:1px solid #8a9488"></div>
<div class="a" style="left:550px;top:355px;width:40px;height:13px;background:#ebe2c6;border-top:1px solid #8a9488;border-left:1px solid #8a9488;border-right:1px solid #8a9488"></div>
<div class="a" style="left:564px;top:357px;width:10px;height:10px;background:linear-gradient(135deg,#e2e2dc,#fdfdfb);border:1px solid #557596"></div>
<div class="a" style="left:238px;top:367px;width:9px;height:1px;background:#cdc9b6"></div>
<div class="a" style="left:238px;top:368px;width:9px;height:1px;background:#f8f6ee"></div>
<div class="a" style="left:249px;top:368px;width:87px;height:13px;background:#c6e5ca;border-top:1px solid #8a9488"></div>
<div class="a" style="left:336px;top:368px;width:51px;height:13px;background:#c6e5ca;border-top:1px solid #8a9488;border-left:1px solid #8a9488"></div>
<div class="a" style="left:387px;top:368px;width:163px;height:13px;background:#c6e5ca;border-top:1px solid #8a9488;border-left:1px solid #8a9488"></div>
<div class="a" style="left:550px;top:368px;width:40px;height:13px;background:#c9dcc0;border-top:1px solid #8a9488;border-left:1px solid #8a9488;border-right:1px solid #8a9488"></div>
<div class="a" style="left:564px;top:370px;width:10px;height:10px;background:linear-gradient(135deg,#e2e2dc,#fdfdfb);border:1px solid #557596"></div>
<div class="a" style="left:238px;top:380px;width:9px;height:1px;background:#cdc9b6"></div>
<div class="a" style="left:238px;top:381px;width:9px;height:1px;background:#f8f6ee"></div>
<div class="a" style="left:249px;top:381px;width:87px;height:13px;background:#fcefd6;border-top:1px solid #8a9488"></div>
<div class="a" style="left:336px;top:381px;width:51px;height:13px;background:#fcefd6;border-top:1px solid #8a9488;border-left:1px solid #8a9488"></div>
<div class="a" style="left:387px;top:381px;width:163px;height:13px;background:#fcefd6;border-top:1px solid #8a9488;border-left:1px solid #8a9488"></div>
<div class="a" style="left:550px;top:381px;width:40px;height:13px;background:#ebe2c6;border-top:1px solid #8a9488;border-left:1px solid #8a9488;border-right:1px solid #8a9488"></div>
<div class="a" style="left:564px;top:383px;width:10px;height:10px;background:linear-gradient(135deg,#e2e2dc,#fdfdfb);border:1px solid #557596"></div>
<div class="a" style="left:249px;top:394px;width:341px;height:1px;background:#8a9488"></div>
<div class="a" style="left:238px;top:393px;width:9px;height:1px;background:#cdc9b6"></div>
<div class="a" style="left:238px;top:394px;width:9px;height:1px;background:#f8f6ee"></div>
<div class="a" style="left:4px;top:418px;width:591px;height:1px;background:#fbfaf4"></div>
<svg class="a" style="left:0;top:0" width="600" height="425">
<text x="22.39" y="16.30" font-size="10.6" fill="#0a2a8c" font-weight="bold" textLength="76.94" lengthAdjust="spacingAndGlyphs" style="white-space:pre">Superbill Setup</text>
<text x="21.39" y="15.30" font-size="10.6" fill="#fff" font-weight="bold" textLength="76.94" lengthAdjust="spacingAndGlyphs" style="white-space:pre">Superbill Setup</text>
<text x="110.41" y="43.20" font-size="8.6" fill="#000" stroke="#000" stroke-width="0.08" textLength="23.58" lengthAdjust="spacingAndGlyphs" style="white-space:pre">Create</text>
<text x="199.97" y="43.20" font-size="8.6" fill="#000" stroke="#000" stroke-width="0.08" textLength="25.78" lengthAdjust="spacingAndGlyphs" style="white-space:pre">Search</text>
<text x="17.18" y="75.80" font-size="8.6" fill="#000" stroke="#000" stroke-width="0.08" textLength="62.52" lengthAdjust="spacingAndGlyphs" style="white-space:pre">Select a Superbill</text>
<text x="20.97" y="91.00" font-size="8.6" fill="#202020" stroke="#202020" stroke-width="0.08" textLength="79.74" lengthAdjust="spacingAndGlyphs" style="white-space:pre">Superbill name here...</text>
<text x="178.86" y="91.30" font-size="8.6" fill="#000" stroke="#000" stroke-width="0.08" textLength="27.99" lengthAdjust="spacingAndGlyphs" style="white-space:pre">Refresh</text>
<text x="245.66" y="71.00" font-size="8.6" fill="#000" stroke="#000" stroke-width="0.08" textLength="57.77" lengthAdjust="spacingAndGlyphs" style="white-space:pre">Superbill Type :</text>
<text x="265.67" y="93.60" font-size="8.6" fill="#000" stroke="#000" stroke-width="0.08" textLength="37.75" lengthAdjust="spacingAndGlyphs" style="white-space:pre">Specialty :</text>
<text x="308.09" y="93.00" font-size="8.6" fill="#000" stroke="#000" stroke-width="0.08" textLength="108.04" lengthAdjust="spacingAndGlyphs" style="white-space:pre">OBSTETRICS  GYNECOLOGY</text>
<text x="23.63" y="129.10" font-size="8.3" fill="#000" font-weight="bold" textLength="81.87" lengthAdjust="spacingAndGlyphs" style="white-space:pre">Superbill Categories</text>
<text x="22.90" y="145.80" font-size="8.6" fill="#000" stroke="#000" stroke-width="0.08" textLength="47.08" lengthAdjust="spacingAndGlyphs" style="white-space:pre">Category List</text>
<text x="135.90" y="161.90" font-size="8.6" fill="#000" stroke="#000" stroke-width="0.08" textLength="15.49" lengthAdjust="spacingAndGlyphs" style="white-space:pre">Add</text>
<text x="190.87" y="161.90" font-size="8.6" fill="#000" stroke="#000" stroke-width="0.08" textLength="27.36" lengthAdjust="spacingAndGlyphs" style="white-space:pre">Refresh</text>
<text x="242.86" y="129.10" font-size="8.3" fill="#000" font-weight="bold" textLength="75.24" lengthAdjust="spacingAndGlyphs" style="white-space:pre">Category Contents</text>
<text x="247.64" y="146.00" font-size="8.6" fill="#000" stroke="#000" stroke-width="0.08" textLength="60.46" lengthAdjust="spacingAndGlyphs" style="white-space:pre">Procedure Code</text>
<text x="389.47" y="145.80" font-size="8.6" fill="#000" stroke="#000" stroke-width="0.08" textLength="55.92" lengthAdjust="spacingAndGlyphs" style="white-space:pre">Diagnosis Code</text>
<text x="545.36" y="161.90" font-size="8.6" fill="#000" stroke="#000" stroke-width="0.08" textLength="28.09" lengthAdjust="spacingAndGlyphs" style="white-space:pre">Refresh</text>
<text x="21.18" y="182.50" font-size="8.6" fill="#000" stroke="#000" stroke-width="0.08" textLength="33.82" lengthAdjust="spacingAndGlyphs" style="white-space:pre">Category</text>
<text x="157.26" y="182.50" font-size="8.6" fill="#000" stroke="#000" stroke-width="0.08" textLength="21.85" lengthAdjust="spacingAndGlyphs" style="white-space:pre">Order</text>
<text x="190.08" y="182.50" font-size="8.6" fill="#000" stroke="#000" stroke-width="0.08" textLength="22.50" lengthAdjust="spacingAndGlyphs" style="white-space:pre">Delete</text>
<text x="21.36" y="196.20" font-size="8.6" fill="#000" stroke="#000" stroke-width="0.08" textLength="43.13" lengthAdjust="spacingAndGlyphs" style="white-space:pre">New Patient</text>
<text x="174.42" y="196.20" font-size="8.6" fill="#000" stroke="#000" stroke-width="0.08" textLength="4.45" lengthAdjust="spacingAndGlyphs" style="white-space:pre">1</text>
<text x="21.60" y="209.20" font-size="8.6" fill="#000" stroke="#000" stroke-width="0.08" textLength="40.03" lengthAdjust="spacingAndGlyphs" style="white-space:pre">Counseling</text>
<text x="174.42" y="209.20" font-size="8.6" fill="#000" stroke="#000" stroke-width="0.08" textLength="4.45" lengthAdjust="spacingAndGlyphs" style="white-space:pre">2</text>
<text x="21.60" y="222.20" font-size="8.6" fill="#000" stroke="#000" stroke-width="0.08" textLength="66.25" lengthAdjust="spacingAndGlyphs" style="white-space:pre">Complete Physical</text>
<text x="174.34" y="222.20" font-size="8.6" fill="#000" stroke="#000" stroke-width="0.08" textLength="4.45" lengthAdjust="spacingAndGlyphs" style="white-space:pre">3</text>
<text x="21.36" y="235.20" font-size="8.6" fill="#000" stroke="#000" stroke-width="0.08" textLength="55.14" lengthAdjust="spacingAndGlyphs" style="white-space:pre">Existing Patient</text>
<text x="174.26" y="235.20" font-size="8.6" fill="#000" stroke="#000" stroke-width="0.08" textLength="4.45" lengthAdjust="spacingAndGlyphs" style="white-space:pre">4</text>
<text x="21.36" y="248.20" font-size="8.6" fill="#000" stroke="#000" stroke-width="0.08" textLength="41.36" lengthAdjust="spacingAndGlyphs" style="white-space:pre">Lacerations</text>
<text x="174.34" y="248.20" font-size="8.6" fill="#000" stroke="#000" stroke-width="0.08" textLength="4.45" lengthAdjust="spacingAndGlyphs" style="white-space:pre">5</text>
<text x="21.36" y="261.20" font-size="8.6" fill="#000" stroke="#000" stroke-width="0.08" textLength="57.36" lengthAdjust="spacingAndGlyphs" style="white-space:pre">Lesion Removal</text>
<text x="174.34" y="261.20" font-size="8.6" fill="#000" stroke="#000" stroke-width="0.08" textLength="4.45" lengthAdjust="spacingAndGlyphs" style="white-space:pre">6</text>
<text x="21.28" y="274.20" font-size="8.6" fill="#000" stroke="#000" stroke-width="0.08" textLength="33.80" lengthAdjust="spacingAndGlyphs" style="white-space:pre">Injections</text>
<text x="174.42" y="274.20" font-size="8.6" fill="#000" stroke="#000" stroke-width="0.08" textLength="4.45" lengthAdjust="spacingAndGlyphs" style="white-space:pre">7</text>
<text x="21.68" y="287.20" font-size="8.6" fill="#000" stroke="#000" stroke-width="0.08" textLength="36.01" lengthAdjust="spacingAndGlyphs" style="white-space:pre">Obstetrics</text>
<text x="174.34" y="287.20" font-size="8.6" fill="#fff" stroke="#fff" stroke-width="0.08" textLength="4.45" lengthAdjust="spacingAndGlyphs" style="white-space:pre">8</text>
<text x="21.84" y="300.20" font-size="8.6" fill="#000" stroke="#000" stroke-width="0.08" textLength="18.67" lengthAdjust="spacingAndGlyphs" style="white-space:pre">Tests</text>
<text x="174.42" y="300.20" font-size="8.6" fill="#000" stroke="#000" stroke-width="0.08" textLength="4.45" lengthAdjust="spacingAndGlyphs" style="white-space:pre">9</text>
<text x="252.33" y="182.50" font-size="8.6" fill="#000" stroke="#000" stroke-width="0.08" textLength="18.79" lengthAdjust="spacingAndGlyphs" style="white-space:pre">Type</text>
<text x="338.80" y="182.50" font-size="8.6" fill="#000" stroke="#000" stroke-width="0.08" textLength="19.12" lengthAdjust="spacingAndGlyphs" style="white-space:pre">Code</text>
<text x="389.36" y="182.50" font-size="8.6" fill="#000" stroke="#000" stroke-width="0.08" textLength="40.02" lengthAdjust="spacingAndGlyphs" style="white-space:pre">Description</text>
<text x="558.27" y="182.50" font-size="8.6" fill="#000" stroke="#000" stroke-width="0.08" textLength="22.71" lengthAdjust="spacingAndGlyphs" style="white-space:pre">Delete</text>
<text x="251.84" y="196.20" font-size="8.6" fill="#000" stroke="#000" stroke-width="0.08" textLength="60.16" lengthAdjust="spacingAndGlyphs" style="white-space:pre">Procedure Code</text>
<text x="338.91" y="196.20" font-size="8.6" fill="#000" stroke="#000" stroke-width="0.08" textLength="20.12" lengthAdjust="spacingAndGlyphs" style="white-space:pre">99201</text>
<text x="390.47" y="196.20" font-size="8.6" fill="#000" stroke="#000" stroke-width="0.08" textLength="130.28" lengthAdjust="spacingAndGlyphs" style="white-space:pre">OFFICE/OUTPATIENT VISIT, NEW</text>
<text x="251.84" y="209.20" font-size="8.6" fill="#000" stroke="#000" stroke-width="0.08" textLength="60.16" lengthAdjust="spacingAndGlyphs" style="white-space:pre">Procedure Code</text>
<text x="338.91" y="209.20" font-size="8.6" fill="#000" stroke="#000" stroke-width="0.08" textLength="20.12" lengthAdjust="spacingAndGlyphs" style="white-space:pre">99202</text>
<text x="390.47" y="209.20" font-size="8.6" fill="#000" stroke="#000" stroke-width="0.08" textLength="130.28" lengthAdjust="spacingAndGlyphs" style="white-space:pre">OFFICE/OUTPATIENT VISIT, NEW</text>
<text x="251.84" y="222.20" font-size="8.6" fill="#000" stroke="#000" stroke-width="0.08" textLength="60.16" lengthAdjust="spacingAndGlyphs" style="white-space:pre">Procedure Code</text>
<text x="338.91" y="222.20" font-size="8.6" fill="#000" stroke="#000" stroke-width="0.08" textLength="20.05" lengthAdjust="spacingAndGlyphs" style="white-space:pre">99203</text>
<text x="390.47" y="222.20" font-size="8.6" fill="#000" stroke="#000" stroke-width="0.08" textLength="130.28" lengthAdjust="spacingAndGlyphs" style="white-space:pre">OFFICE/OUTPATIENT VISIT, NEW</text>
<text x="251.84" y="235.20" font-size="8.6" fill="#000" stroke="#000" stroke-width="0.08" textLength="60.16" lengthAdjust="spacingAndGlyphs" style="white-space:pre">Procedure Code</text>
<text x="338.91" y="235.20" font-size="8.6" fill="#000" stroke="#000" stroke-width="0.08" textLength="19.98" lengthAdjust="spacingAndGlyphs" style="white-space:pre">99204</text>
<text x="390.47" y="235.20" font-size="8.6" fill="#000" stroke="#000" stroke-width="0.08" textLength="130.28" lengthAdjust="spacingAndGlyphs" style="white-space:pre">OFFICE/OUTPATIENT VISIT, NEW</text>
<text x="251.84" y="248.20" font-size="8.6" fill="#000" stroke="#000" stroke-width="0.08" textLength="60.16" lengthAdjust="spacingAndGlyphs" style="white-space:pre">Procedure Code</text>
<text x="338.91" y="248.20" font-size="8.6" fill="#000" stroke="#000" stroke-width="0.08" textLength="20.05" lengthAdjust="spacingAndGlyphs" style="white-space:pre">99205</text>
<text x="390.47" y="248.20" font-size="8.6" fill="#000" stroke="#000" stroke-width="0.08" textLength="130.28" lengthAdjust="spacingAndGlyphs" style="white-space:pre">OFFICE/OUTPATIENT VISIT, NEW</text>
<text x="251.84" y="261.20" font-size="8.6" fill="#000" stroke="#000" stroke-width="0.08" textLength="60.16" lengthAdjust="spacingAndGlyphs" style="white-space:pre">Procedure Code</text>
<text x="338.90" y="261.20" font-size="8.6" fill="#000" stroke="#000" stroke-width="0.08" textLength="20.14" lengthAdjust="spacingAndGlyphs" style="white-space:pre">99211</text>
<text x="390.48" y="261.20" font-size="8.6" fill="#000" stroke="#000" stroke-width="0.08" textLength="122.38" lengthAdjust="spacingAndGlyphs" style="white-space:pre">OFFICE/OUTPATIENT VISIT, EST</text>
<text x="251.84" y="274.20" font-size="8.6" fill="#000" stroke="#000" stroke-width="0.08" textLength="60.16" lengthAdjust="spacingAndGlyphs" style="white-space:pre">Procedure Code</text>
<text x="338.91" y="274.20" font-size="8.6" fill="#000" stroke="#000" stroke-width="0.08" textLength="20.12" lengthAdjust="spacingAndGlyphs" style="white-space:pre">99212</text>
<text x="390.48" y="274.20" font-size="8.6" fill="#000" stroke="#000" stroke-width="0.08" textLength="122.38" lengthAdjust="spacingAndGlyphs" style="white-space:pre">OFFICE/OUTPATIENT VISIT, EST</text>
<text x="251.84" y="287.20" font-size="8.6" fill="#000" stroke="#000" stroke-width="0.08" textLength="60.16" lengthAdjust="spacingAndGlyphs" style="white-space:pre">Procedure Code</text>
<text x="338.91" y="287.20" font-size="8.6" fill="#000" stroke="#000" stroke-width="0.08" textLength="20.05" lengthAdjust="spacingAndGlyphs" style="white-space:pre">99213</text>
<text x="390.48" y="287.20" font-size="8.6" fill="#000" stroke="#000" stroke-width="0.08" textLength="103.26" lengthAdjust="spacingAndGlyphs" style="white-space:pre">OFFICE/OUTPATIENT VISIT</text>
<text x="251.84" y="300.20" font-size="8.6" fill="#000" stroke="#000" stroke-width="0.08" textLength="60.16" lengthAdjust="spacingAndGlyphs" style="white-space:pre">Procedure Code</text>
<text x="338.91" y="300.20" font-size="8.6" fill="#000" stroke="#000" stroke-width="0.08" textLength="19.98" lengthAdjust="spacingAndGlyphs" style="white-space:pre">99214</text>
<text x="390.48" y="300.20" font-size="8.6" fill="#000" stroke="#000" stroke-width="0.08" textLength="122.38" lengthAdjust="spacingAndGlyphs" style="white-space:pre">OFFICE/OUTPATIENT VISIT, EST</text>
<text x="251.84" y="313.20" font-size="8.6" fill="#000" stroke="#000" stroke-width="0.08" textLength="60.16" lengthAdjust="spacingAndGlyphs" style="white-space:pre">Procedure Code</text>
<text x="338.91" y="313.20" font-size="8.6" fill="#000" stroke="#000" stroke-width="0.08" textLength="20.05" lengthAdjust="spacingAndGlyphs" style="white-space:pre">99215</text>
<text x="390.48" y="313.20" font-size="8.6" fill="#000" stroke="#000" stroke-width="0.08" textLength="122.38" lengthAdjust="spacingAndGlyphs" style="white-space:pre">OFFICE/OUTPATIENT VISIT, EST</text>
<text x="251.84" y="326.20" font-size="8.6" fill="#000" stroke="#000" stroke-width="0.08" textLength="60.16" lengthAdjust="spacingAndGlyphs" style="white-space:pre">Procedure Code</text>
<text x="338.91" y="326.20" font-size="8.6" fill="#000" stroke="#000" stroke-width="0.08" textLength="20.05" lengthAdjust="spacingAndGlyphs" style="white-space:pre">99385</text>
<text x="390.16" y="326.20" font-size="8.6" fill="#000" stroke="#000" stroke-width="0.08" textLength="119.59" lengthAdjust="spacingAndGlyphs" style="white-space:pre">PREVENTIVE VISIT, NEW, 18-39</text>
<text x="251.84" y="339.20" font-size="8.6" fill="#000" stroke="#000" stroke-width="0.08" textLength="60.16" lengthAdjust="spacingAndGlyphs" style="white-space:pre">Procedure Code</text>
<text x="338.91" y="339.20" font-size="8.6" fill="#000" stroke="#000" stroke-width="0.08" textLength="20.05" lengthAdjust="spacingAndGlyphs" style="white-space:pre">99386</text>
<text x="390.16" y="339.20" font-size="8.6" fill="#000" stroke="#000" stroke-width="0.08" textLength="119.59" lengthAdjust="spacingAndGlyphs" style="white-space:pre">PREVENTIVE VISIT, NEW, 40-64</text>
<text x="251.84" y="352.20" font-size="8.6" fill="#000" stroke="#000" stroke-width="0.08" textLength="60.16" lengthAdjust="spacingAndGlyphs" style="white-space:pre">Procedure Code</text>
<text x="338.91" y="352.20" font-size="8.6" fill="#000" stroke="#000" stroke-width="0.08" textLength="20.12" lengthAdjust="spacingAndGlyphs" style="white-space:pre">99387</text>
<text x="390.17" y="352.20" font-size="8.6" fill="#000" stroke="#000" stroke-width="0.08" textLength="129.16" lengthAdjust="spacingAndGlyphs" style="white-space:pre">PREVENTIVE VISIT,NEW,65&amp;OVER</text>
<text x="251.84" y="365.20" font-size="8.6" fill="#000" stroke="#000" stroke-width="0.08" textLength="60.16" lengthAdjust="spacingAndGlyphs" style="white-space:pre">Procedure Code</text>
<text x="338.91" y="365.20" font-size="8.6" fill="#000" stroke="#000" stroke-width="0.08" textLength="20.05" lengthAdjust="spacingAndGlyphs" style="white-space:pre">99395</text>
<text x="390.17" y="365.20" font-size="8.6" fill="#000" stroke="#000" stroke-width="0.08" textLength="115.00" lengthAdjust="spacingAndGlyphs" style="white-space:pre">PREVENTIVE VISIT, EST, 18-39</text>
<text x="251.84" y="378.20" font-size="8.6" fill="#000" stroke="#000" stroke-width="0.08" textLength="60.16" lengthAdjust="spacingAndGlyphs" style="white-space:pre">Procedure Code</text>
<text x="338.91" y="378.20" font-size="8.6" fill="#000" stroke="#000" stroke-width="0.08" textLength="20.05" lengthAdjust="spacingAndGlyphs" style="white-space:pre">99396</text>
<text x="390.16" y="378.20" font-size="8.6" fill="#000" stroke="#000" stroke-width="0.08" textLength="115.34" lengthAdjust="spacingAndGlyphs" style="white-space:pre">PREVENTIVE VISIT, EST, 40-64</text>
<text x="251.84" y="391.20" font-size="8.6" fill="#000" stroke="#000" stroke-width="0.08" textLength="60.16" lengthAdjust="spacingAndGlyphs" style="white-space:pre">Procedure Code</text>
<text x="338.91" y="391.20" font-size="8.6" fill="#000" stroke="#000" stroke-width="0.08" textLength="20.12" lengthAdjust="spacingAndGlyphs" style="white-space:pre">99397</text>
<text x="390.17" y="391.20" font-size="8.6" fill="#000" stroke="#000" stroke-width="0.08" textLength="125.46" lengthAdjust="spacingAndGlyphs" style="white-space:pre">PREVENTIVE VISIT,EST,65&amp;OVER</text>
</svg>
</body></html>
